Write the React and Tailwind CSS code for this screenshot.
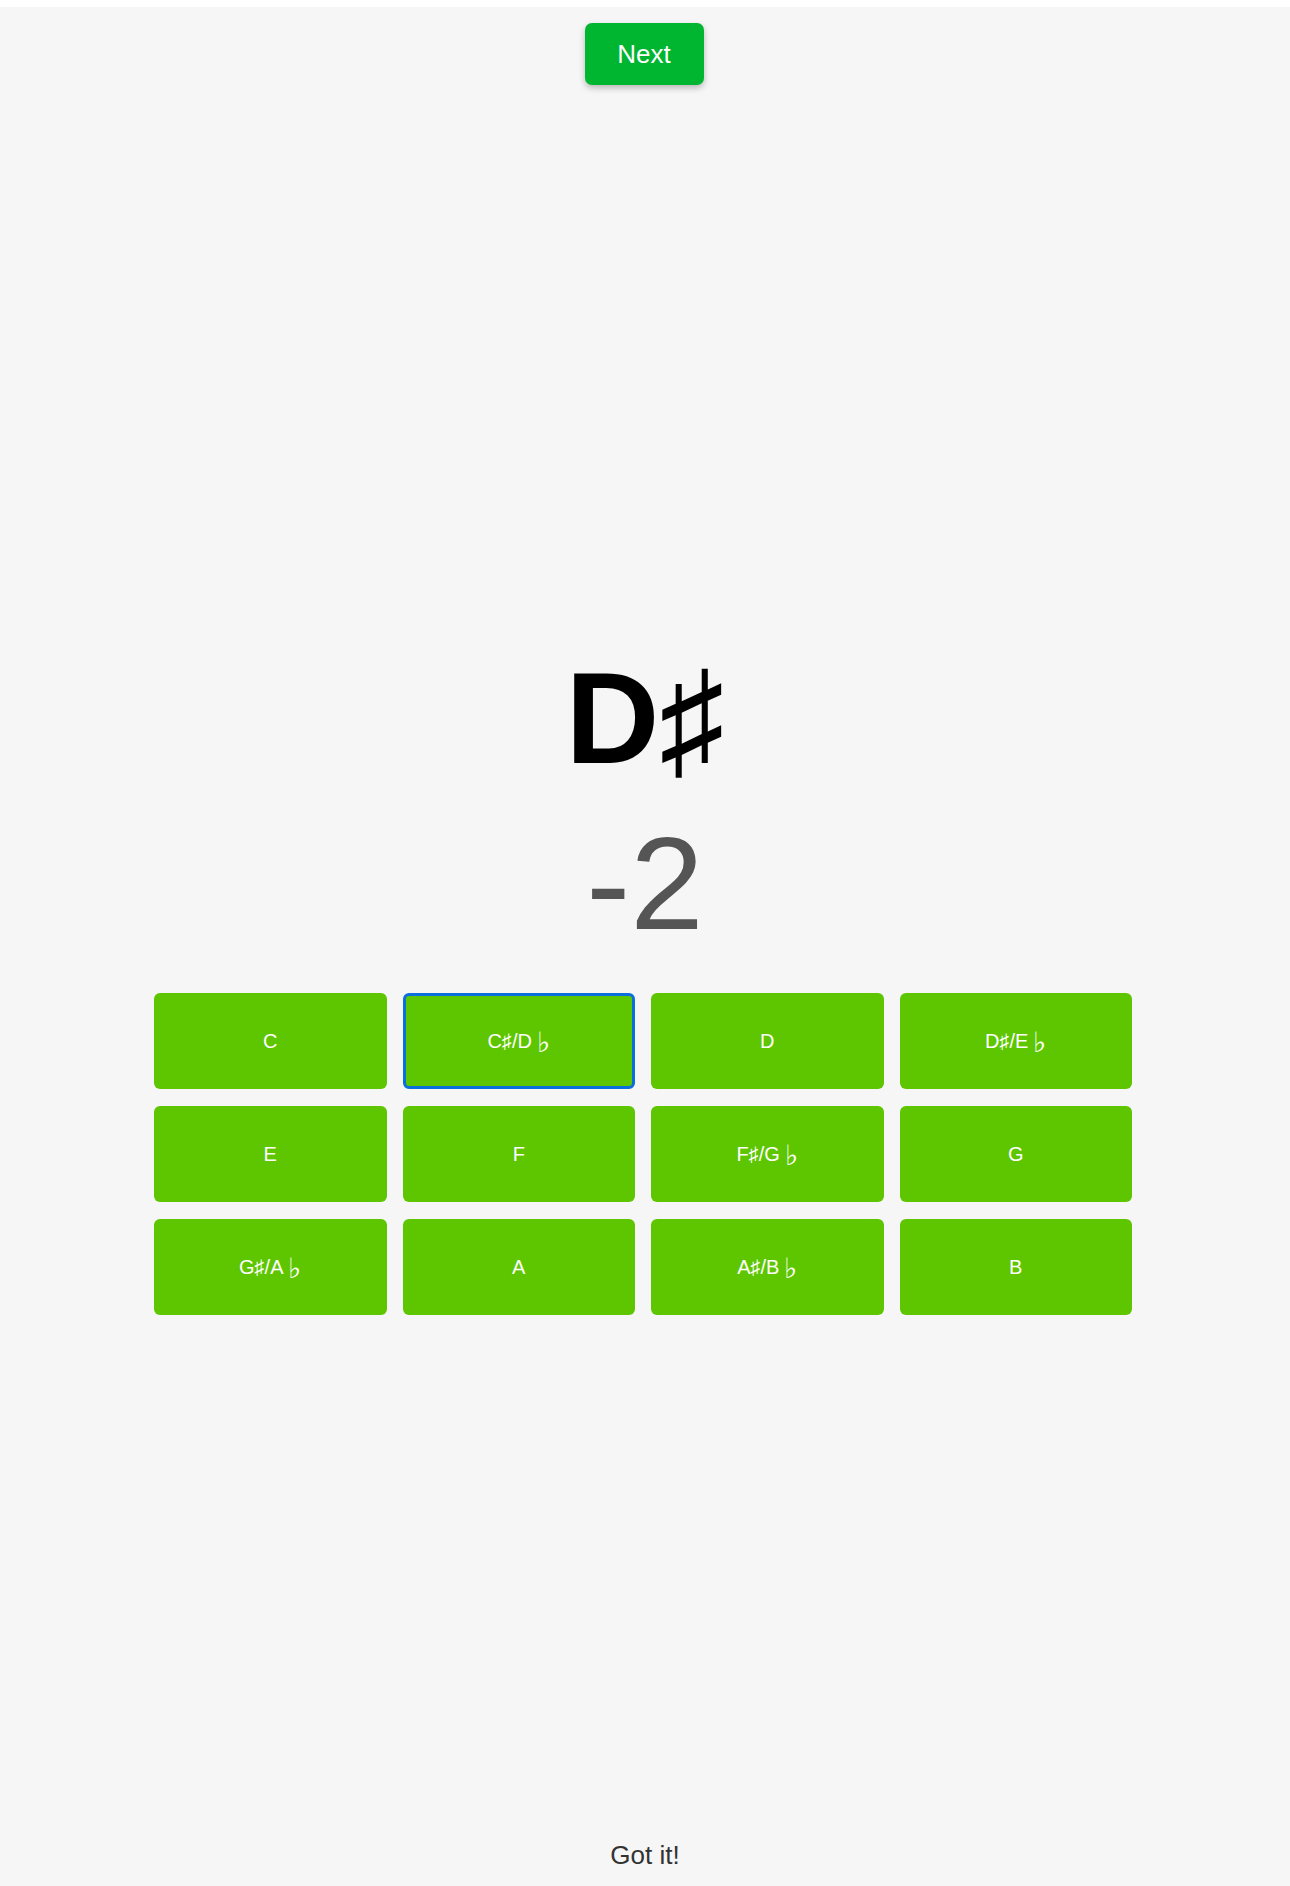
import React from 'react';

const notes = [
  'C', 'C♯/D♭', 'D', 'D♯/E♭',
  'E', 'F', 'F♯/G♭', 'G',
  'G♯/A♭', 'A', 'A♯/B♭', 'B',
];

// flats get a little gap and sit a touch lower, like the original symbol font
function NoteLabel({ text }) {
  return (
    <>
      {[...text].map((ch, i) =>
        ch === '♭' ? (
          <span key={i} className="relative top-[2px] ml-[5px] text-[28px] leading-none">
            {ch}
          </span>
        ) : (
          <span key={i}>{ch}</span>
        )
      )}
    </>
  );
}

export default function App() {
  const selected = 'C♯/D♭';

  return (
    <div className="min-h-screen bg-white pt-[7px] font-['Liberation_Sans',Arial,sans-serif]">
      <div className="flex h-[1879px] flex-col items-center bg-[#f6f6f6]">
        {/* Next */}
        <button className="mt-4 mr-[2px] h-[62px] w-[119px] rounded-[7px] bg-[#00b52f] text-[26px] text-white shadow-[0_3px_6px_rgba(0,0,0,0.25)]">
          Next
        </button>

        {/* Note + offset */}
        <div className="mt-[568px] text-[130px] font-bold leading-none text-black">D♯</div>
        <div className="mt-[35px] text-[132px] leading-none text-[#555555]">-2</div>

        {/* Answer grid */}
        <div className="mt-[43px] mr-[4px] grid w-[978px] grid-cols-4 gap-x-4 gap-y-[17px]">
          {notes.map((n) => (
            <button
              key={n}
              className={`flex h-[96px] items-center justify-center rounded-[6px] bg-[#5ec600] text-[20px] text-white ${
                n === selected ? 'border-[3px] border-[#0a6fdc]' : ''
              }`}
            >
              <NoteLabel text={n} />
            </button>
          ))}
        </div>

        {/* Footer */}
        <div className="mt-auto mb-[18px] text-[26px] leading-none text-[#333333]">Got it!</div>
      </div>
    </div>
  );
}
